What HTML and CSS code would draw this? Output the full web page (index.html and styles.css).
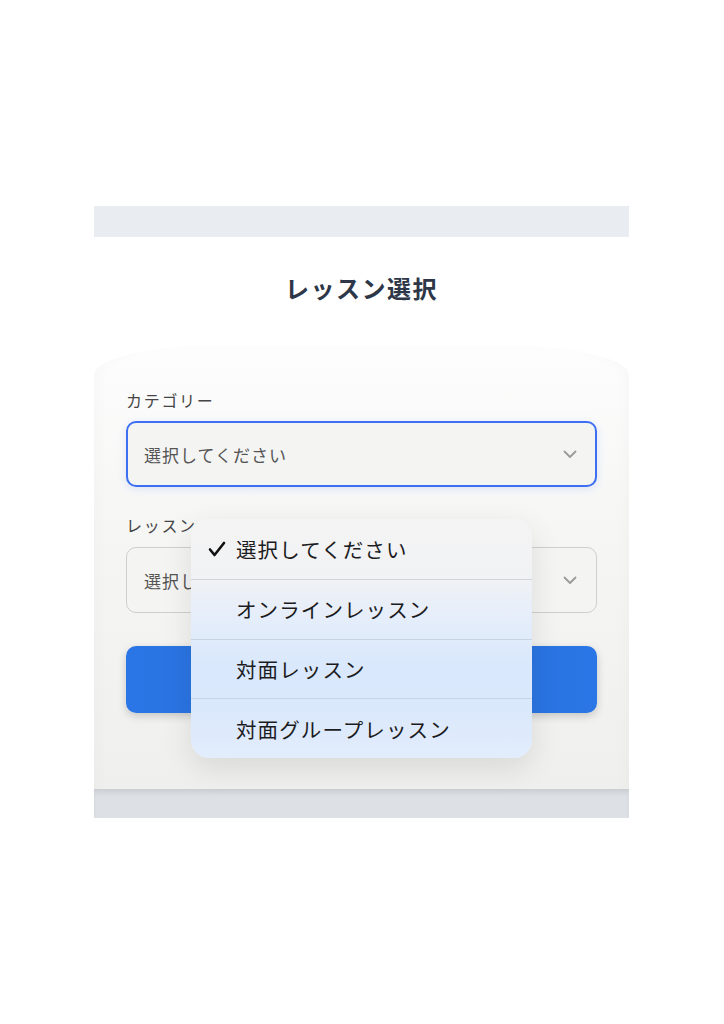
FILE: index.html
```html
<!DOCTYPE html>
<html lang="ja">
<head>
<meta charset="utf-8">
<title>レッスン選択</title>
<link rel="stylesheet" href="styles.css">
</head>
<body>
<div class="screen">
  <div class="topbar"></div>
  <main class="main">
    <h1 class="title">レッスン選択</h1>
    <section class="card">
      <div class="field">
        <label class="label">カテゴリー</label>
        <div class="select select-focus">
          <span class="select-text">選択してください</span>
          <svg class="chev" width="14" height="9" viewBox="0 0 14 9"><path d="M1.5 1.5 L7 7 L12.5 1.5" fill="none" stroke="#9a9a9a" stroke-width="1.8" stroke-linecap="round" stroke-linejoin="round"/></svg>
        </div>
      </div>
      <div class="field">
        <label class="label">レッスン</label>
        <div class="select">
          <span class="select-text">選択してください</span>
          <svg class="chev" width="14" height="9" viewBox="0 0 14 9"><path d="M1.5 1.5 L7 7 L12.5 1.5" fill="none" stroke="#9a9a9a" stroke-width="1.8" stroke-linecap="round" stroke-linejoin="round"/></svg>
        </div>
      </div>
      <button class="btn" aria-label="次へ"></button>
    </section>
  </main>
  <div class="bottombar"></div>

  <div class="popup">
    <div class="opt opt-selected">
      <svg class="check" width="18" height="16" viewBox="0 0 18 16"><path d="M2 8.5 L6.5 14 L16 2" fill="none" stroke="#111" stroke-width="2.6" stroke-linecap="round" stroke-linejoin="round"/></svg>
      <span>選択してください</span>
    </div>
    <div class="opt"><span>オンラインレッスン</span></div>
    <div class="opt"><span>対面レッスン</span></div>
    <div class="opt"><span>対面グループレッスン</span></div>
  </div>
</div>
</body>
</html>
```

FILE: styles.css
```css
* { box-sizing: border-box; }
html, body { margin: 0; padding: 0; background: #ffffff; }
body {
  font-family: "Noto Sans CJK JP", "Noto Sans", sans-serif;
  padding-top: 206px;
}
.screen {
  position: relative;
  width: 535px;
  margin-left: 94px;
}
.topbar {
  height: 31px;
  background: #e9edf1;
}
.main {
  height: 552px;
  background: #ffffff;
  display: flex;
  flex-direction: column;
}
.title {
  margin: 0;
  padding-top: 34px;
  font-size: 24px;
  line-height: 34px;
  font-weight: 700;
  color: #2d3748;
  text-align: center;
  letter-spacing: 1.5px;
}
.card {
  margin-top: 40px;
  flex: 1;
  border-radius: 130px 130px 0 0 / 30px 30px 0 0;
  background: linear-gradient(180deg, #fdfdfd 0%, #f6f6f5 40%, #efefed 100%);
  box-shadow: inset 12px 0 18px -12px rgba(0,0,0,0.03), inset -12px 0 18px -12px rgba(0,0,0,0.03);
  padding: 45px 32px 0 32px;
  display: flex;
  flex-direction: column;
}
.field {
  display: flex;
  flex-direction: column;
  margin-bottom: 28px;
}
.field + .field { margin-bottom: 33px; }
.label {
  font-size: 16px;
  line-height: 20px;
  color: #454545;
  margin-bottom: 11px;
  letter-spacing: 1.7px;
}
.field + .field .label { margin-bottom: 12px; }
.select {
  height: 66px;
  border: 1px solid #cfcfcf;
  border-radius: 10px;
  background: #f4f4f3;
  display: flex;
  align-items: center;
  justify-content: space-between;
  padding: 0 19px 0 17px;
}
.select-focus {
  border: 2px solid #3d6ff3;
  padding: 0 18px 0 16px;
  box-shadow: 0 2px 8px rgba(61,111,243,0.15);
}
.select-text {
  font-size: 17px;
  color: #555555;
  letter-spacing: 1px;
}
.btn {
  height: 67px;
  border: none;
  border-radius: 10px;
  background: linear-gradient(90deg, #2a76e6 0%, #2a6fd8 50%, #2a76e6 100%);
  box-shadow: 0 3px 8px rgba(0,0,0,0.18);
}
.bottombar {
  height: 29px;
  background: #dde1e6;
  box-shadow: inset 0 5px 6px -3px rgba(0,0,0,0.12);
}
.popup {
  position: absolute;
  left: 97px;
  top: 313px;
  width: 341px;
  height: 239px;
  border-radius: 18px;
  overflow: hidden;
  background: linear-gradient(180deg, #f4f4f4 0%, #f1f2f4 24%, #e6eefa 40%, #d9e8fc 62%, #dae8fc 78%, #e2edfc 100%);
  box-shadow: 0 10px 30px rgba(0,0,0,0.10);
  display: flex;
  flex-direction: column;
}
.opt {
  height: 60px;
  display: flex;
  align-items: center;
  padding-left: 45px;
  font-size: 20.5px;
  color: #1c1c1e;
  letter-spacing: 1.1px;
  position: relative;
}
.opt + .opt { border-top: 1px solid #c9d3e2; }
.opt:nth-child(2) { border-top-color: #d3d5da; }
.check {
  position: absolute;
  left: 17px;
  top: 22px;
}
```
